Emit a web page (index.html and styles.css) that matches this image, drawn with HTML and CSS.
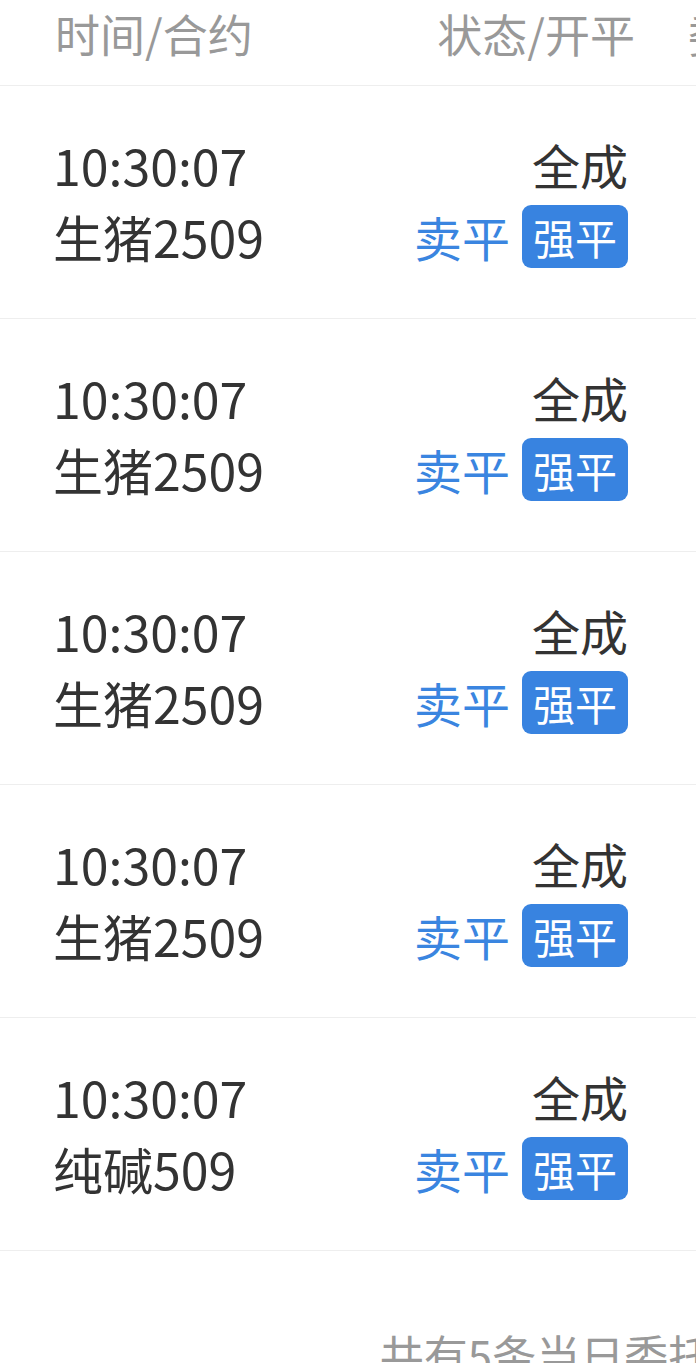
FILE: index.html
```html
<!DOCTYPE HTML>
<html>
	<head>
		<title>当日委托</title>
		<meta charset="utf-8">
		<link rel="stylesheet" href="styles.css">
	</head>
	<body>
		<div class="table">
			<div class="head">
				<div class="col_time">时间/合约</div>
				<div class="col_status">状态/开平</div>
				<div class="col_more">委托价</div>
			</div>

			<div class="row">
				<div class="col_time">
					<div class="line">10:30:07</div>
					<div class="line">生猪2509</div>
				</div>
				<div class="col_status">
					<div class="line">全成</div>
					<div class="line"><span class="side">卖平</span><span class="tag">强平</span></div>
				</div>
			</div>

			<div class="row">
				<div class="col_time">
					<div class="line">10:30:07</div>
					<div class="line">生猪2509</div>
				</div>
				<div class="col_status">
					<div class="line">全成</div>
					<div class="line"><span class="side">卖平</span><span class="tag">强平</span></div>
				</div>
			</div>

			<div class="row">
				<div class="col_time">
					<div class="line">10:30:07</div>
					<div class="line">生猪2509</div>
				</div>
				<div class="col_status">
					<div class="line">全成</div>
					<div class="line"><span class="side">卖平</span><span class="tag">强平</span></div>
				</div>
			</div>

			<div class="row">
				<div class="col_time">
					<div class="line">10:30:07</div>
					<div class="line">生猪2509</div>
				</div>
				<div class="col_status">
					<div class="line">全成</div>
					<div class="line"><span class="side">卖平</span><span class="tag">强平</span></div>
				</div>
			</div>

			<div class="row">
				<div class="col_time">
					<div class="line">10:30:07</div>
					<div class="line">纯碱509</div>
				</div>
				<div class="col_status">
					<div class="line">全成</div>
					<div class="line"><span class="side">卖平</span><span class="tag">强平</span></div>
				</div>
			</div>

			<div class="footer">共有5条当日委托</div>
		</div>
	</body>
</html>
```

FILE: styles.css
```css
html, body {
	margin: 0px;
	padding: 0px;
	width: 100%;
	height: 100%;
	overflow: hidden;
	background-color: #FFF;
}

.table {
	width: 1092px;
	font-family: "Noto Sans CJK SC", "Noto Sans", sans-serif;
	color: #333;
}

.head {
	display: flex;
	height: 85px;
	padding-left: 55px;
	border-bottom: 1px solid #EEE;
	font-size: 45px;
	line-height: 68px;
	color: #999;
}

.head .col_time {
	width: 325px;
}

.head .col_status {
	width: 255px;
	text-align: right;
}

.col_more {
	margin-left: 53px;
}

.row {
	display: flex;
	height: 233px;
	box-sizing: border-box;
	padding-top: 42px;
	padding-left: 53px;
	border-bottom: 1px solid #EEE;
	font-size: 50px;
}

.line {
	height: 72px;
	line-height: 72px;
}

.row .col_time {
	width: 330px;
}

.row .col_status {
	width: 245px;
	text-align: right;
	font-size: 48px;
}

.row .col_status .line {
	display: flex;
	justify-content: flex-end;
	align-items: center;
}

.side {
	color: #3A85E0;
	margin-right: 12px;
}

.tag {
	display: inline-block;
	height: 63px;
	line-height: 63px;
	padding: 0px 11px;
	border-radius: 9px;
	background-color: #3883E0;
	color: #FFF;
	font-size: 42px;
}

.footer {
	padding-top: 73px;
	text-align: center;
	font-size: 44px;
	line-height: 60px;
	color: #999;
}
```
